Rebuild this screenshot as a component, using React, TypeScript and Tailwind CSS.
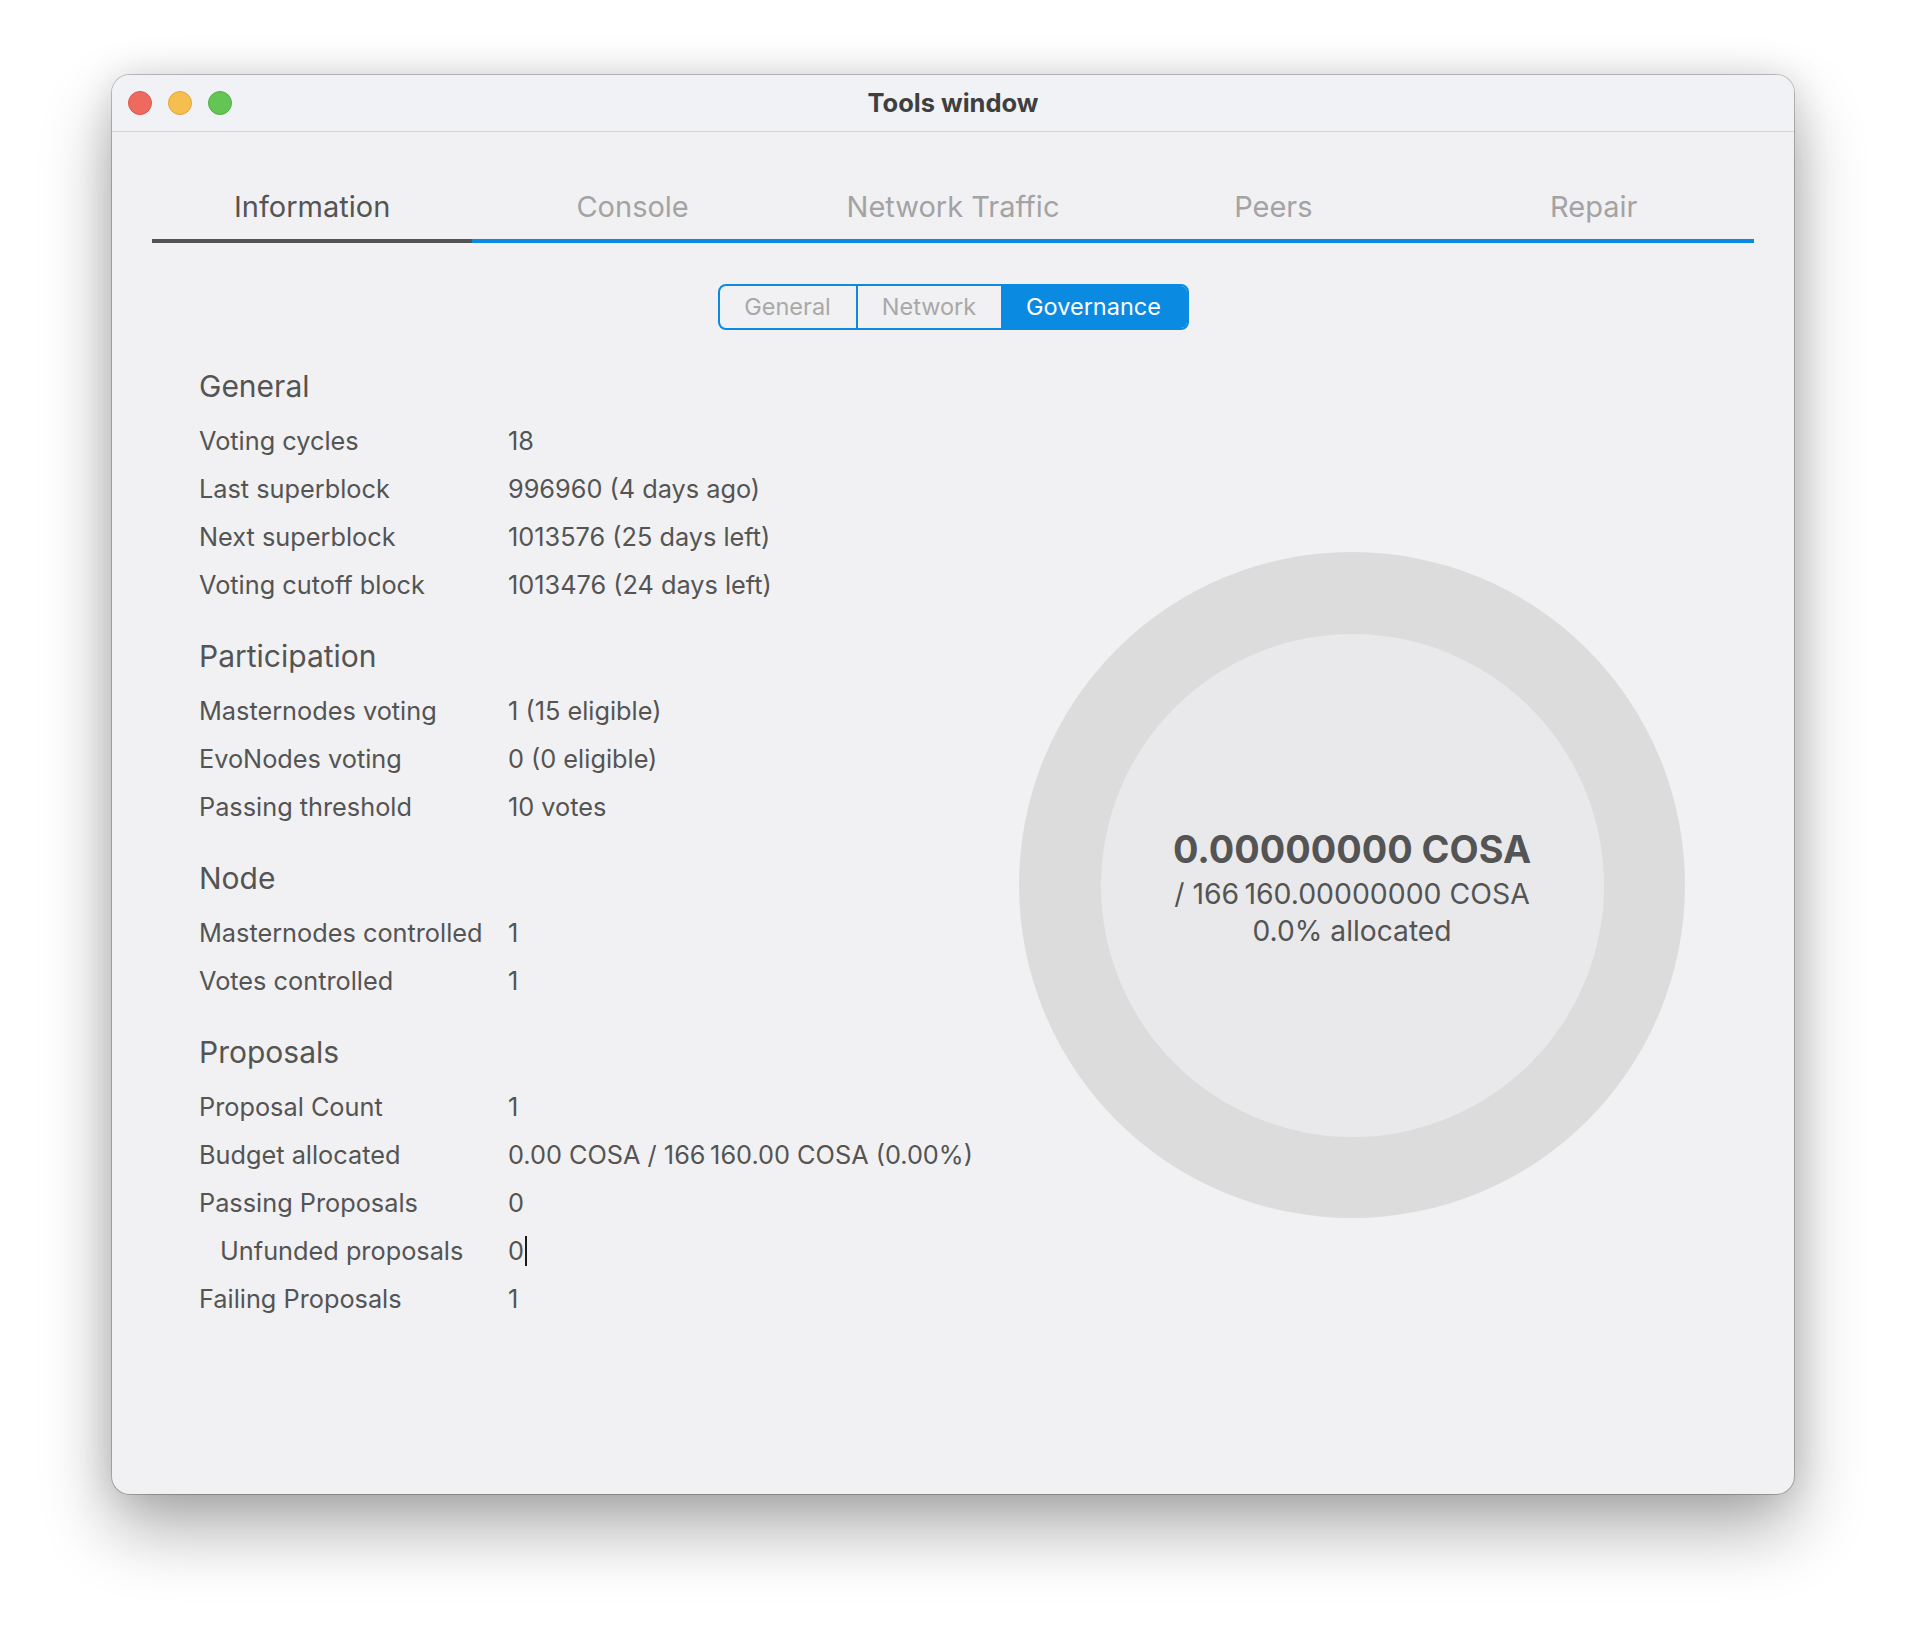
import React from 'react';

const tabs = ['Information', 'Console', 'Network Traffic', 'Peers', 'Repair'];

type Row = { label: string; value: string; indent?: boolean; cursor?: boolean };

const sections: { title: string; rows: Row[] }[] = [
  {
    title: 'General',
    rows: [
      { label: 'Voting cycles', value: '18' },
      { label: 'Last superblock', value: '996960 (4 days ago)' },
      { label: 'Next superblock', value: '1013576 (25 days left)' },
      { label: 'Voting cutoff block', value: '1013476 (24 days left)' },
    ],
  },
  {
    title: 'Participation',
    rows: [
      { label: 'Masternodes voting', value: '1 (15 eligible)' },
      { label: 'EvoNodes voting', value: '0 (0 eligible)' },
      { label: 'Passing threshold', value: '10 votes' },
    ],
  },
  {
    title: 'Node',
    rows: [
      { label: 'Masternodes controlled', value: '1' },
      { label: 'Votes controlled', value: '1' },
    ],
  },
  {
    title: 'Proposals',
    rows: [
      { label: 'Proposal Count', value: '1' },
      { label: 'Budget allocated', value: '0.00 COSA / 166\u2009160.00 COSA (0.00%)' },
      { label: 'Passing Proposals', value: '0' },
      { label: 'Unfunded proposals', value: '0', indent: true, cursor: true },
      { label: 'Failing Proposals', value: '1' },
    ],
  },
];

export default function App() {
  return (
    <div className="min-h-[1642px] w-[1906px] bg-white pt-[75px] pl-[112px] font-[Inter,'Liberation_Sans',sans-serif] text-[#545454]">
      {/* Window */}
      <div className="flex h-[1419px] w-[1682px] flex-col overflow-hidden rounded-[18px] bg-[#f1f1f3] shadow-[0_0_0_1px_rgba(0,0,0,0.22),0_34px_70px_rgba(0,0,0,0.33),0_0_36px_rgba(0,0,0,0.12)]">
        {/* Title bar */}
        <div className="relative flex h-[57px] shrink-0 items-center justify-center border-b border-[#d4d4d6] bg-[#f0f2f5]">
          <div className="absolute left-[16px] top-[16px] flex gap-[16px]">
            <span className="h-[24px] w-[24px] rounded-full border border-[#d9554a] bg-[#ee6a5f]" />
            <span className="h-[24px] w-[24px] rounded-full border border-[#dea63a] bg-[#f5be4f]" />
            <span className="h-[24px] w-[24px] rounded-full border border-[#4fae46] bg-[#62c554]" />
          </div>
          <span className="pt-[1px] text-[25.5px] font-bold text-[#3f3f3f]">Tools window</span>
        </div>

        {/* Main tabs */}
        <div className="mx-[40px] mt-[49px] grid grid-cols-5">
          {tabs.map((t, i) => (
            <div
              key={t}
              className={`border-b-4 pb-[6px] text-center text-[29px] leading-[52px] ${
                i === 0 ? 'border-[#545454] text-[#545454]' : 'border-[#0b8ae2] text-[#a3a3a3]'
              }`}
            >
              {t}
            </div>
          ))}
        </div>

        {/* Segmented control */}
        <div className="mt-[41px] flex justify-center">
          <div className="flex h-[46px] overflow-hidden rounded-[8px] border-2 border-[#0b8ae2] text-[23.5px]">
            <div className="flex w-[138px] items-center justify-center border-r-2 border-[#0b8ae2] text-[#a8a8a8]">
              General
            </div>
            <div className="flex w-[143px] items-center justify-center text-[#a8a8a8]">Network</div>
            <div className="flex w-[186px] items-center justify-center bg-[#0b8ae2] text-white">Governance</div>
          </div>
        </div>

        {/* Body */}
        <div className="mt-[36px] flex pl-[87px]">
          <div className="w-[720px] shrink-0">
            {sections.map((s, si) => (
              <div key={s.title} className={si === 0 ? '' : 'mt-[27px]'}>
                <div className="mb-[11px] text-[30px] leading-[40px]">{s.title}</div>
                {s.rows.map((r) => (
                  <div key={r.label} className="flex whitespace-nowrap text-[25.3px] leading-[48px]">
                    <div className={`w-[309px] shrink-0 ${r.indent ? 'pl-[21px]' : ''}`}>{r.label}</div>
                    <div className="flex items-center">
                      {r.value}
                      {r.cursor && <span className="ml-[1px] h-[30px] w-[2px] bg-[#1a1a1a]" />}
                    </div>
                  </div>
                ))}
              </div>
            ))}
          </div>

          {/* Budget donut */}
          <div className="ml-[100px] mt-[186px] shrink-0">
            <div className="flex h-[666px] w-[666px] items-center justify-center rounded-full bg-[#dcdcdd]">
              <div className="flex h-[503px] w-[503px] flex-col items-center justify-center rounded-full bg-[#e9e9eb] pt-[2px] text-center">
                <div className="text-[37.8px] font-bold leading-[48px] text-[#545454]">0.00000000 COSA</div>
                <div className="text-[28.4px] leading-[42px]">/ 166{'\u2009'}160.00000000 COSA</div>
                <div className="text-[28.2px] leading-[32px]">0.0% allocated</div>
              </div>
            </div>
          </div>
        </div>
      </div>
    </div>
  );
}
